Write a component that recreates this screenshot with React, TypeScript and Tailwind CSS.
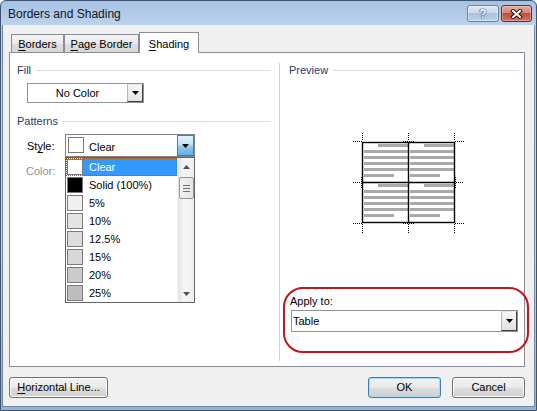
import React from "react";

const U = ({ children }: { children: React.ReactNode }) => (
  <span className="underline underline-offset-[2px] decoration-[1px]">{children}</span>
);

const Down = ({ fill = "#000" }: { fill?: string }) => (
  <svg width="7" height="4" viewBox="0 0 7 4">
    <path d="M0 0h7L3.5 4z" fill={fill} />
  </svg>
);
const Up = ({ fill = "#000" }: { fill?: string }) => (
  <svg width="7" height="4" viewBox="0 0 7 4">
    <path d="M0 4h7L3.5 0z" fill={fill} />
  </svg>
);

function GroupHeader({ label }: { label: string }) {
  return (
    <div className="h-[15px] flex items-center">
      <span className="leading-[15px] text-[#1e3a6e]">{label}</span>
      <div className="flex-1 h-px bg-[#d5dfe5] ml-[5px]" />
    </div>
  );
}

function ClassicDrop() {
  return (
    <div className="w-[16px] h-full flex items-center justify-center bg-[linear-gradient(#f6f6f6,#e2e2e2)] border border-t-[#e6e6e6] border-l-[#b5b5b5] border-r-[#3f3f3f] border-b-[#3f3f3f]">
      <Down />
    </div>
  );
}

const rows = [
  { label: "Clear", bg: "bg-white" },
  { label: "Solid (100%)", bg: "bg-black" },
  { label: "5%", bg: "bg-[#f0f0f0]" },
  { label: "10%", bg: "bg-[#e4e4e4]" },
  { label: "12.5%", bg: "bg-[#dddddd]" },
  { label: "15%", bg: "bg-[#d8d8d8]" },
  { label: "20%", bg: "bg-[#cbcbcb]" },
  { label: "25%", bg: "bg-[#bebebe]" },
];

function PatternList() {
  return (
    <div className="absolute top-[22px] left-[-1px] z-20 w-[130px] h-[146px] border border-[#646464] bg-white flex">
      <div className="w-[111px] flex flex-col relative">
        {rows.map((r, i) => (
          <div key={r.label} className="h-[18px] flex items-center">
            <div className={`ml-[1px] w-[16px] h-[16px] border border-[#7a7a7a] shrink-0 ${r.bg}`} />
            <div
              className={
                i === 0
                  ? "flex-1 h-full bg-[#3399ff] text-white pl-[6px] leading-[18px]"
                  : "flex-1 h-full pl-[6px] leading-[18px]"
              }
            >
              {r.label}
            </div>
          </div>
        ))}
        <div className="absolute left-0 top-0 w-[111px] h-[18px] border border-dotted border-[#a85a12]" />
      </div>
      <div className="w-[17px] bg-[linear-gradient(90deg,#e2e2e2,#f5f5f5_35%,#efefef)] flex flex-col items-center border-l border-[#f8f8f8]">
        <div className="h-[17px] flex items-center justify-center">
          <Up fill="#505050" />
        </div>
        <div className="w-[15px] h-[22px] mt-[2px] rounded-[2px] border border-[#969696] bg-[linear-gradient(90deg,#f4f4f4,#e4e4e4)] flex flex-col items-center justify-center gap-[2px]">
          <div className="w-[7px] h-px bg-[#707070]" />
          <div className="w-[7px] h-px bg-[#707070]" />
          <div className="w-[7px] h-px bg-[#707070]" />
        </div>
        <div className="mt-auto h-[17px] flex items-center justify-center">
          <Down fill="#505050" />
        </div>
      </div>
    </div>
  );
}

function PreviewDrawing() {
  const cells = [
    [364, 144],
    [410, 144],
    [364, 184],
    [410, 184],
  ];
  const bars: React.ReactNode[] = [];
  cells.forEach(([x, y], ci) => {
    bars.push(<rect key={`a${ci}`} x={x + 14} y={y} width={30} height={3} fill="#a9a9a9" />);
    for (let k = 1; k <= 4; k++)
      bars.push(<rect key={`b${ci}${k}`} x={x} y={y + 6 * k} width={44} height={3} fill="#a9a9a9" />);
    bars.push(<rect key={`c${ci}`} x={x} y={y + 30} width={30} height={3} fill="#a9a9a9" />);
  });
  const dl = (x1: number, y1: number, x2: number, y2: number, k: string) => (
    <line key={k} x1={x1} y1={y1} x2={x2} y2={y2} stroke="#000" strokeWidth={1} strokeDasharray="1 1" />
  );
  return (
    <svg width="230" height="216" viewBox="289 78 230 216" className="block">
      {bars}
      <rect x={362.5} y={142.5} width={92} height={80} fill="none" stroke="#000" strokeWidth={1.4} />
      <line x1={408.5} y1={142} x2={408.5} y2={223} stroke="#000" strokeWidth={1.4} />
      <line x1={362} y1={182.5} x2={455} y2={182.5} stroke="#000" strokeWidth={1.4} />
      {dl(362.5, 133, 362.5, 141, "d1")}
      {dl(353, 141.5, 362, 141.5, "d2")}
      {dl(408.5, 133, 408.5, 141, "d3")}
      {dl(403, 141.5, 414, 141.5, "d4")}
      {dl(454.5, 133, 454.5, 141, "d5")}
      {dl(455, 141.5, 464, 141.5, "d6")}
      {dl(353, 182.5, 361, 182.5, "d7")}
      {dl(361.5, 177, 361.5, 188, "d8")}
      {dl(456, 182.5, 464, 182.5, "d9")}
      {dl(455.5, 177, 455.5, 188, "d10")}
      {dl(353, 223.5, 362, 223.5, "d11")}
      {dl(362.5, 224, 362.5, 233, "d12")}
      {dl(408.5, 224, 408.5, 233, "d13")}
      {dl(403, 223.5, 414, 223.5, "d14")}
      {dl(455, 223.5, 464, 223.5, "d15")}
      {dl(454.5, 224, 454.5, 233, "d16")}
    </svg>
  );
}

function VistaButton({
  children,
  w,
  def = false,
  className = "",
}: {
  children: React.ReactNode;
  w: string;
  def?: boolean;
  className?: string;
}) {
  return (
    <div
      className={`${w} h-[21px] rounded-[3px] border ${
        def
          ? "border-[#3c7fb1] shadow-[inset_0_0_0_1px_#9fdcf7]"
          : "border-[#707070] shadow-[inset_0_0_0_1px_#fbfbfb]"
      } bg-[linear-gradient(#f2f2f2_0%,#ebebeb_48%,#dddddd_52%,#cfcfcf_100%)] flex items-center justify-center leading-[13px] ${className}`}
    >
      {children}
    </div>
  );
}

export default function App() {
  return (
    <div className="w-[537px] h-[411px] flex flex-col border border-[#3f5473] rounded-t-[6px] bg-[linear-gradient(#a6c2e3,#bcd2eb_24px,#c2d6ec_60%,#93b3da)] font-['Liberation_Sans',Arial,sans-serif] text-[11px] text-black overflow-hidden">
      {/* Title bar */}
      <div className="h-[24px] shrink-0 flex items-start pl-[7px] pr-[4px]">
        <span className="text-[12px] leading-[14px] mt-[6px] text-[#10141c]">Borders and Shading</span>
        <div className="ml-auto mt-[4px] flex gap-[2px]">
          <div className="w-[32px] h-[17px] rounded-[3px] border border-[#6a81a0] bg-[linear-gradient(#dde8f5,#c6d7ec_50%,#a9c2e1_50%,#bcd1ea)] shadow-[inset_0_0_0_1px_rgba(255,255,255,0.45)] flex items-center justify-center">
            <span className="text-white font-bold text-[12px] leading-[12px] [text-shadow:0_0_1px_#2c3b52,0_0_1px_#2c3b52,0_0_1px_#2c3b52]">
              ?
            </span>
          </div>
          <div className="w-[31px] h-[17px] rounded-[3px] border border-[#6a2a25] bg-[linear-gradient(#e9aa9a,#d6826f_50%,#c24a3b_50%,#d27361)] shadow-[inset_0_0_0_1px_rgba(255,255,255,0.3)] flex items-center justify-center">
            <svg width="13" height="10" viewBox="0 0 13 10">
              <path d="M3 2L10 8M10 2L3 8" stroke="#3a1410" strokeWidth="4" strokeLinecap="square" />
              <path d="M3 2L10 8M10 2L3 8" stroke="#ffffff" strokeWidth="2" strokeLinecap="square" />
            </svg>
          </div>
        </div>
      </div>

      {/* Client area */}
      <div className="flex-1 mx-[1px] mb-[3px] border-l border-r border-b border-[#6f86a2] bg-[#f0f0f0] flex flex-col pt-[7px] pl-[6px] pr-[9px]">
        {/* Tabs */}
        <div className="h-[20px] flex items-end pl-[2px]">
          <div className="w-[53px] h-[18px] border border-b-0 border-[#898c95] bg-[linear-gradient(#f4f4f4,#e9e9e9_50%,#dcdcdc_50%,#d9d9d9)] flex items-center justify-center pt-[1px] leading-[13px]">
            <span>
              <U>B</U>orders
            </span>
          </div>
          <div className="w-[75px] h-[18px] ml-[0px] border border-b-0 border-[#898c95] bg-[linear-gradient(#f4f4f4,#e9e9e9_50%,#dcdcdc_50%,#d9d9d9)] flex items-center justify-center pt-[1px] leading-[13px]">
            <span>
              <U>P</U>age Border
            </span>
          </div>
          <div className="relative z-10 w-[60px] h-[21px] -mb-px border border-b-0 border-[#898c95] bg-white flex items-center justify-center pt-[2px] leading-[13px]">
            <span>
              <U>S</U>hading
            </span>
          </div>
        </div>

        {/* Panel */}
        <div className="h-[315px] border border-[#898c95] bg-white flex pl-[7px] pr-[5px] pt-[10px] pb-[5px]">
          {/* Left column */}
          <div className="w-[254px] flex flex-col">
            <GroupHeader label="Fill" />
            <div className="mt-[5px] ml-[10px] w-[117px] h-[20px] border border-[#8f939a] bg-white flex">
              <div className="flex-1 flex items-center justify-center leading-[13px]">No Color</div>
              <ClassicDrop />
            </div>
            <div className="mt-[11px]">
              <GroupHeader label="Patterns" />
            </div>
            <div className="mt-[5px] flex items-start">
              <div className="ml-[10px] w-[38px] h-[23px] leading-[23px] pt-[1px]">
                St<U>y</U>le:
              </div>
              <div className="relative w-[130px] h-[23px] border border-[#7f848c] bg-white flex">
                <div className="ml-[2px] mt-[2px] w-[16px] h-[16px] border border-[#7a7a7a] bg-white shrink-0" />
                <div className="ml-[5px] pt-[6px] leading-[13px]">Clear</div>
                <div className="ml-auto w-[17px] h-full border border-[#3c7fb1] bg-[linear-gradient(#e3f4fd,#bde3f8_45%,#8fcaef_55%,#5fb0e2)] flex items-center justify-center">
                  <Down />
                </div>
                <PatternList />
              </div>
            </div>
            <div className="mt-[7px] ml-[9px] leading-[15px] text-[#8d8d8d]">Color:</div>
          </div>

          {/* Divider */}
          <div className="ml-[8px] w-px bg-[#cdd5dd]" />

          {/* Right column */}
          <div className="ml-[9px] w-[230px] flex flex-col relative">
            <GroupHeader label="Preview" />
            <PreviewDrawing />
            <div className="ml-[1px] leading-[15px]">Apply to:</div>
            <div className="mt-[1px] ml-[2px] w-[227px] h-[22px] border border-[#8f939a] bg-white flex">
              <div className="flex-1 pl-[1px] flex items-center leading-[13px]">Table</div>
              <ClassicDrop />
            </div>
            <div className="absolute left-[-6px] top-[224px] w-[246px] h-[66px] rounded-[20px] border-2 border-[#c2151c]" />
          </div>
        </div>

        {/* Bottom buttons */}
        <div className="mt-[10px] flex">
          <VistaButton w="w-[99px]">
            <span>
              <U>H</U>orizontal Line...
            </span>
          </VistaButton>
          <VistaButton w="w-[73px]" def className="ml-auto">
            OK
          </VistaButton>
          <VistaButton w="w-[73px]" className="ml-[11px]">
            Cancel
          </VistaButton>
        </div>
      </div>
    </div>
  );
}
